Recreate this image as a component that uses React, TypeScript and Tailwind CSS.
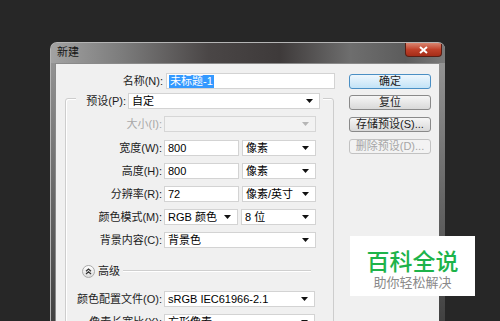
import React from "react";

const Arrow = ({ disabled }: { disabled?: boolean }) => (
  <svg width="7" height="4" viewBox="0 0 7 4" className="shrink-0">
    <path d="M0 0H7L3.5 4Z" fill={disabled ? "#b5b5b5" : "#111"} />
  </svg>
);

const Select = ({
  w,
  text,
  disabled,
}: {
  w: string;
  text?: string;
  disabled?: boolean;
}) => (
  <div
    className={`${w} h-[16px] flex items-center justify-between pl-[3px] pr-[6px] border ${
      disabled ? "bg-[#f2f2f2] border-[#d6d6d6]" : "bg-white border-[#d3d3d3]"
    }`}
  >
    <span className="leading-none whitespace-nowrap">{text}</span>
    <Arrow disabled={disabled} />
  </div>
);

const Input = ({ w, text }: { w: string; text: string }) => (
  <div className={`${w} h-[16px] flex items-center pl-[3px] bg-white border border-[#d3d3d3]`}>
    <span className="leading-none">{text}</span>
  </div>
);

const Row = ({
  label,
  mt,
  children,
  disabled,
}: {
  label: string;
  mt: string;
  children: React.ReactNode;
  disabled?: boolean;
}) => (
  <div className={`${mt} flex items-center h-[16px]`}>
    <div
      className={`w-[98px] text-right pr-[2px] leading-none whitespace-nowrap ${
        disabled ? "text-[#a8a8a8]" : "text-[#1c1c1c]"
      }`}
    >
      {label}
    </div>
    <div className="flex gap-[3px]">{children}</div>
  </div>
);

const Button = ({
  text,
  mt,
  variant,
}: {
  text: string;
  mt: string;
  variant?: "default" | "disabled";
}) => {
  const cls =
    variant === "default"
      ? "border-[#4a8fc4] bg-gradient-to-b from-[#eef7fd] to-[#c3e3f7] text-[#1c1c1c]"
      : variant === "disabled"
      ? "border-[#c2c2c2] bg-[#f3f3f3] text-[#a6a6a6]"
      : "border-[#8a8a8a] bg-gradient-to-b from-[#f6f6f6] to-[#d9d9d9] text-[#1c1c1c]";
  return (
    <div
      className={`${mt} w-[82px] h-[15px] rounded-[3px] border flex items-center justify-center leading-none ${cls}`}
    >
      {text}
    </div>
  );
};

export default function App() {
  return (
    <div className="w-[500px] h-[321px] bg-[#272727] overflow-hidden relative text-[11px] font-['Liberation_Sans','Noto_Sans_CJK_SC',sans-serif]">
      <div className="pt-[42px] pl-[50px]">
        <div className="w-[395px] h-[290px] rounded-t-[7px] bg-gradient-to-b from-[#9a9a9a] via-[#6a6a6a] to-[#3e3e3e] flex flex-col overflow-hidden border-t border-l border-[#b5b5b5]">
          {/* title bar */}
          <div className="h-[20px] shrink-0 flex justify-between bg-[linear-gradient(90deg,#a2a2a2_0%,#7c7c7c_18%,#4a4646_40%,#3e3a3a_58%,#6e6e6e_76%,#5c5c5c_90%,#7a7a7a_100%)]">
            <span className="pl-[6px] pt-[4px] leading-none text-[#151515]">新建</span>
            <div className="mr-[3px] w-[37px] h-[14px] rounded-b-[4px] border border-t-0 border-[#5a1e14] bg-gradient-to-b from-[#d9846f] via-[#c0412a] to-[#a52d18] flex items-center justify-center">
              <svg width="9" height="8" viewBox="0 0 9 8">
                <path d="M1 1L8 7M8 1L1 7" stroke="#fff" strokeWidth="2" />
              </svg>
            </div>
          </div>
          {/* client */}
          <div className="flex-1 pl-[4px] pr-[6px]">
            <div className="h-full bg-[#f0f0f0] border-t border-l border-[#8a8a8a] flex pt-[9px] overflow-hidden">
              {/* left column */}
              <div className="w-[284px] shrink-0">
                <div className="flex items-center h-[16px]">
                  <div className="w-[110px] text-right pr-[3px] leading-none text-[#1c1c1c]">名称(N):</div>
                  <div className="w-[169px] h-[16px] flex items-center pl-[2px] bg-white border border-[#d3d3d3]">
                    <span className="bg-[#3399ff] text-white leading-none px-[1px] py-[1px]">未标题-1</span>
                  </div>
                </div>
                {/* group box */}
                <div className="mt-[9px] ml-[9px] w-[269px] h-[300px] border border-[#cdcdcd] rounded-[3px] shadow-[inset_1px_1px_0_#ffffff]">
                  <div className="-mt-[6px] ml-[10px] w-[247px] h-[16px] bg-[#f0f0f0] flex items-center">
                    <div className="w-[52px] text-right pr-[2px] leading-none text-[#1c1c1c]">预设(P):</div>
                    <Select w="w-[192px]" text="自定" />
                  </div>
                  <Row label="大小(I):" mt="mt-[7px]" disabled>
                    <Select w="w-[152px]" disabled />
                  </Row>
                  <Row label="宽度(W):" mt="mt-[8px]">
                    <Input w="w-[75px]" text="800" />
                    <Select w="w-[74px]" text="像素" />
                  </Row>
                  <Row label="高度(H):" mt="mt-[7px]">
                    <Input w="w-[75px]" text="800" />
                    <Select w="w-[74px]" text="像素" />
                  </Row>
                  <Row label="分辨率(R):" mt="mt-[7px]">
                    <Input w="w-[75px]" text="72" />
                    <Select w="w-[74px]" text="像素/英寸" />
                  </Row>
                  <Row label="颜色模式(M):" mt="mt-[7px]">
                    <Select w="w-[74px]" text="RGB 颜色" />
                    <Select w="w-[75px]" text="8 位" />
                  </Row>
                  <Row label="背景内容(C):" mt="mt-[7px]">
                    <Select w="w-[152px]" text="背景色" />
                  </Row>
                  {/* advanced */}
                  <div className="mt-[16px] ml-[16px] h-[14px] flex items-center">
                    <div className="w-[13px] h-[13px] rounded-full border border-[#a9a9a9] bg-gradient-to-b from-[#ffffff] to-[#dcdcdc] flex items-center justify-center">
                      <svg width="7" height="7" viewBox="0 0 7 7">
                        <path d="M1 3.2L3.5 1L6 3.2M1 6L3.5 3.8L6 6" stroke="#333" strokeWidth="1.2" fill="none" />
                      </svg>
                    </div>
                    <span className="ml-[3px] leading-none text-[#1c1c1c]">高级</span>
                    <div className="ml-[3px] w-[188px] h-[2px] border-t border-[#cfcfcf] border-b border-b-white" />
                  </div>
                  <Row label="颜色配置文件(O):" mt="mt-[13px]">
                    <Select w="w-[151px]" text="sRGB IEC61966-2.1" />
                  </Row>
                  <Row label="像素长宽比(X):" mt="mt-[7px]">
                    <Select w="w-[151px]" text="方形像素" />
                  </Row>
                </div>
              </div>
              {/* buttons */}
              <div className="ml-[9px] flex flex-col">
                <Button text="确定" mt="mt-[1px]" variant="default" />
                <Button text="复位" mt="mt-[6px]" />
                <Button text="存储预设(S)..." mt="mt-[7px]" />
                <Button text="删除预设(D)..." mt="mt-[7px]" variant="disabled" />
              </div>
            </div>
          </div>
        </div>
      </div>
      {/* watermark */}
      <div className="absolute left-[350px] top-[236px] w-[125px] h-[60px] bg-white flex flex-col items-center pt-[12px]">
        <div className="h-[24px] text-[23px] leading-[24px] text-[#1db34a] font-['Noto_Sans_CJK_SC',sans-serif] font-medium">百科全说</div>
        <div className="mt-[3px] h-[14px] text-[13px] leading-[14px] text-[#8a8a8a] font-['Noto_Sans_CJK_SC',sans-serif]">助你轻松解决</div>
      </div>
    </div>
  );
}
